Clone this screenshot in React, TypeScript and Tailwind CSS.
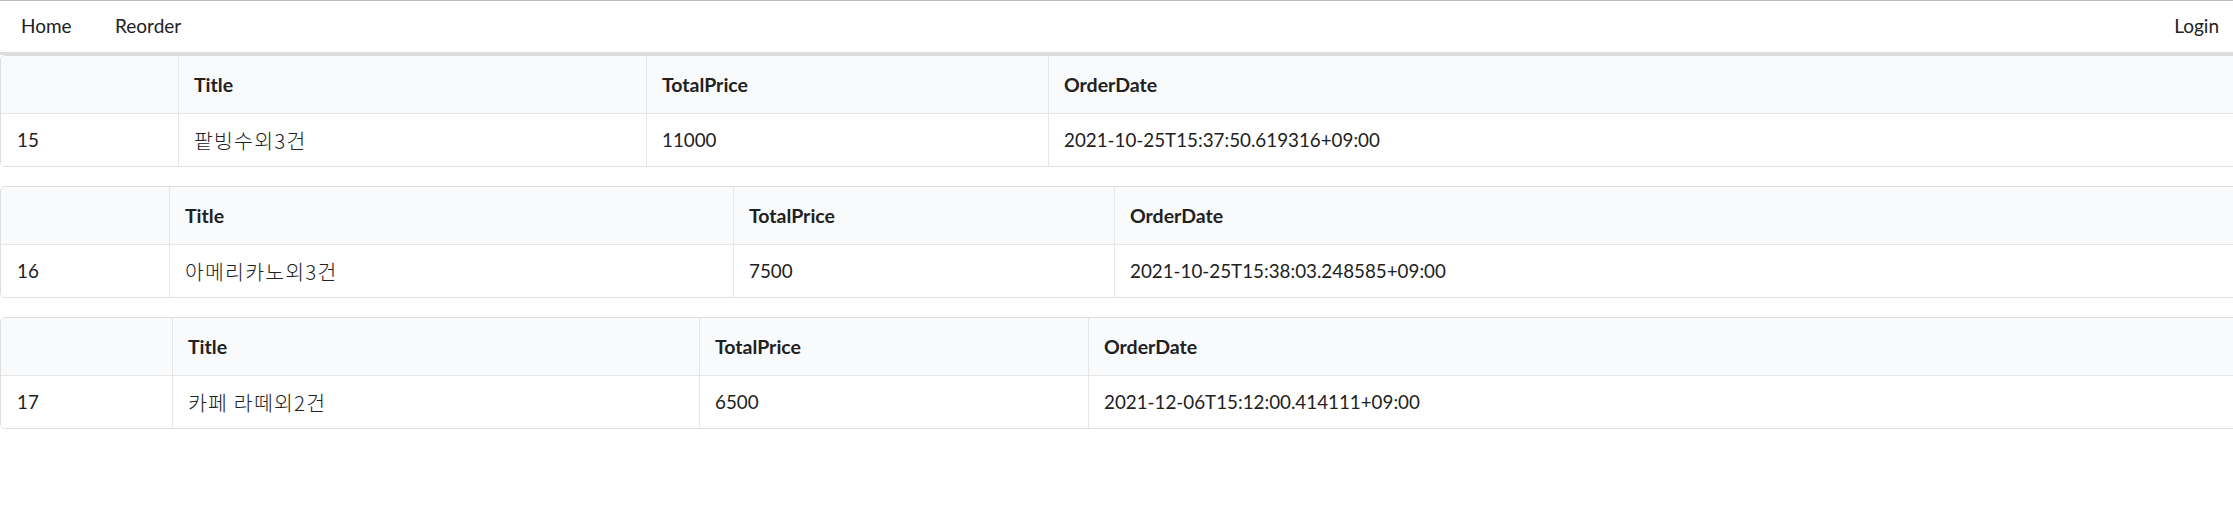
import React from "react";

type Row = { id: string; title: string; price: string; date: string; w: [string, string, string] };

const rows: Row[] = [
  { id: "15", title: "팥빙수외3건", price: "11000", date: "2021-10-25T15:37:50.619316+09:00", w: ["w-[177px]", "w-[468px]", "w-[402px]"] },
  { id: "16", title: "아메리카노외3건", price: "7500", date: "2021-10-25T15:38:03.248585+09:00", w: ["w-[168px]", "w-[564px]", "w-[381px]"] },
  { id: "17", title: "카페 라떼외2건", price: "6500", date: "2021-12-06T15:12:00.414111+09:00", w: ["w-[171px]", "w-[527px]", "w-[389px]"] },
];

function OrderTable({ r }: { r: Row }) {
  return (
    <div className="w-[2400px] shrink-0 rounded-[5px] border border-[#dedede] overflow-hidden">
      <div className="flex h-[58px] bg-[#f9fafb] border-b border-[#e6e6e6] font-bold text-[19.5px]">
        <div className={`${r.w[0]} shrink-0`} />
        <div className={`${r.w[1]} shrink-0 border-l border-[#e6e6e6] pl-[15px] flex items-center`}>Title</div>
        <div className={`${r.w[2]} shrink-0 border-l border-[#e6e6e6] pl-[15px] flex items-center`}>TotalPrice</div>
        <div className="flex-1 border-l border-[#e6e6e6] pl-[15px] flex items-center">OrderDate</div>
      </div>
      <div className="flex h-[52px] bg-white text-[18.8px]">
        <div className={`${r.w[0]} shrink-0 pl-[16px] flex items-center`}>{r.id}</div>
        <div className={`${r.w[1]} shrink-0 border-l border-[#e6e6e6] pl-[15px] flex items-center`}>
          <span className="text-[20.5px] font-light tracking-[1.2px]" style={{ fontFamily: "'Noto Sans CJK KR', sans-serif" }}>{r.title}</span>
        </div>
        <div className={`${r.w[2]} shrink-0 border-l border-[#e6e6e6] pl-[15px] flex items-center`}>{r.price}</div>
        <div className="flex-1 border-l border-[#e6e6e6] pl-[15px] flex items-center">{r.date}</div>
      </div>
    </div>
  );
}

export default function App() {
  return (
    <div
      className="w-full min-h-[505px] bg-white overflow-hidden text-[19px] text-[#212121]"
      style={{ fontFamily: "Lato, 'Noto Sans CJK KR', sans-serif" }}
    >
      <nav className="h-[52px] border-t border-[#bfbfbf] flex items-center">
        <div className="pl-[21px] w-[115px]">Home</div>
        <div>Reorder</div>
        <div className="ml-auto pr-[14px]">Login</div>
      </nav>
      <div className="h-[3px] bg-[#dddddd]" />
      <div className="flex flex-col gap-[19px]">
        {rows.map((r) => (
          <OrderTable key={r.id} r={r} />
        ))}
      </div>
    </div>
  );
}
